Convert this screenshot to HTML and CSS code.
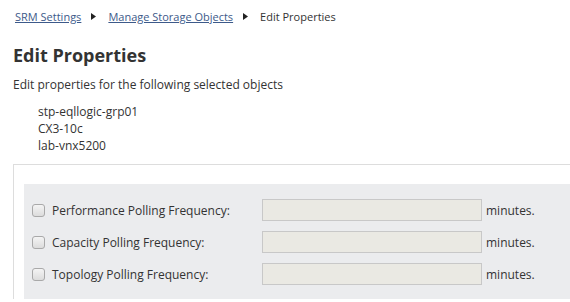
FILE: index.html
```html
<!DOCTYPE html>
<html lang="en">
<head>
<meta charset="UTF-8">
<meta name="viewport" content="width=device-width, initial-scale=1.0">
<title>Edit Properties</title>
<link rel="stylesheet" href="styles.css">
</head>
<body>
<div class="page">
    <!-- Breadcrumb -->
    <div class="crumbs">
        <a href="#">SRM Settings</a>
        <svg class="sep" width="5" height="7" viewBox="0 0 5 7"><path d="M0 0L5 3.5L0 7Z" fill="#222"/></svg>
        <a href="#">Manage Storage Objects</a>
        <svg class="sep" width="5" height="7" viewBox="0 0 5 7"><path d="M0 0L5 3.5L0 7Z" fill="#222"/></svg>
        <span>Edit Properties</span>
    </div>
    <h1>Edit Properties</h1>
    <p class="intro">Edit properties for the following selected objects</p>
    <ul class="objects">
        <li>stp-eqllogic-grp01</li>
        <li>CX3-10c</li>
        <li>lab-vnx5200</li>
    </ul>
    <!-- Polling settings -->
    <div class="box">
        <div class="panel">
            <div class="row">
                <label class="check"><input type="checkbox"> Performance Polling Frequency:</label>
                <input type="text" class="field">
                <span class="unit">minutes.</span>
            </div>
            <div class="row">
                <label class="check"><input type="checkbox"> Capacity Polling Frequency:</label>
                <input type="text" class="field">
                <span class="unit">minutes.</span>
            </div>
            <div class="row">
                <label class="check"><input type="checkbox"> Topology Polling Frequency:</label>
                <input type="text" class="field">
                <span class="unit">minutes.</span>
            </div>
        </div>
    </div>
</div>
</body>
</html>
```

FILE: styles.css
```css
body {
    margin: 0;
    font-family: "Open Sans", Arial, sans-serif;
    font-size: 12px;
    color: #333;
    background: white;
}
.page {
    padding: 8px 0 0 13px;
}
.crumbs {
    display: flex;
    align-items: center;
    height: 17px;
    padding-left: 2px;
    font-size: 11px;
    color: #333;
}
.crumbs a {
    color: #3d5a8a;
    text-decoration: underline;
}
.crumbs .sep {
    margin: 0 12px 0 10px;
}
h1 {
    margin: 18px 0 0;
    font-size: 18px;
    font-weight: bold;
    line-height: 25px;
    color: #333;
}
.intro {
    margin: 8px 0 0;
    line-height: 17px;
}
.objects {
    list-style: none;
    margin: 10px 0 0;
    padding-left: 25px;
    line-height: 17px;
}
.box {
    margin-top: 10px;
    border-top: 1px solid #ddd;
    border-left: 1px solid #ddd;
    padding: 19px 0 0 10px;
}
.panel {
    background: #ebecee;
    padding: 15px 0 14px 8px;
}
.row {
    display: flex;
    align-items: center;
    height: 22px;
    margin-bottom: 10px;
}
.row:last-child {
    margin-bottom: 0;
}
.check {
    display: flex;
    align-items: center;
    width: 230px;
}
.check input {
    appearance: none;
    width: 13px;
    height: 13px;
    margin: 0 7px 0 0;
    border: 1px solid #a9a9a9;
    border-radius: 3px;
    background: linear-gradient(#f4f4f4, #dcdcdc);
}
.field {
    box-sizing: border-box;
    width: 220px;
    height: 22px;
    border: 1px solid #c8c8c8;
    background: #eae9e3;
    margin: 0 4px 0 0;
}
```
